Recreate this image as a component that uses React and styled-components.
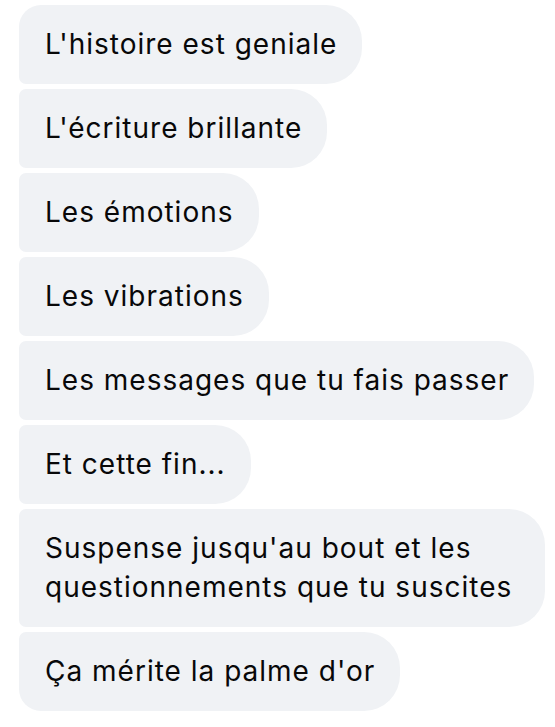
import React from "react";
import styled, { createGlobalStyle } from "styled-components";

const Global = createGlobalStyle`
  html, body { margin: 0; padding: 0; background: #ffffff; }
  body { font-family: Inter, "Noto Sans", sans-serif; }
`;

const Thread = styled.div`
  display: flex;
  flex-direction: column;
  align-items: flex-start;
  gap: 5px;
  padding: 5px 0 0 19px;
`;

const Bubble = styled.div`
  box-sizing: border-box;
  background: #f0f2f5;
  color: #080809;
  font-size: 28px;
  line-height: 39px;
  letter-spacing: 1px;
  padding: 20px 25px 20px 26px;
  max-width: 526px;
  border-radius: ${({ $first, $last }) =>
    `${$first ? 22 : 7}px 36px 36px ${$last ? 22 : 7}px`};
`;

const messages = [
  "L'histoire est geniale",
  "L'écriture brillante",
  "Les émotions",
  "Les vibrations",
  "Les messages que tu fais passer",
  "Et cette fin...",
  "Suspense jusqu'au bout et les questionnements que tu suscites",
  "Ça mérite la palme d'or",
];

export default function App() {
  return (
    <>
      <Global />
      <Thread>
        {messages.map((m, i) => (
          <Bubble key={i} $first={i === 0} $last={i === messages.length - 1}>
            {m}
          </Bubble>
        ))}
      </Thread>
    </>
  );
}
